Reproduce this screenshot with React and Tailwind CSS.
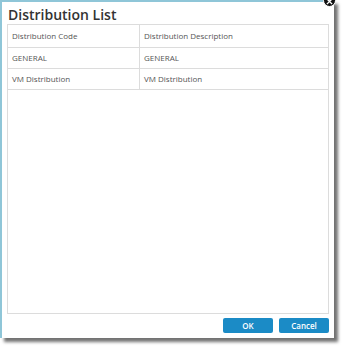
import React from 'react';

const rows = [
    ['Distribution Code', 'Distribution Description'],
    ['GENERAL', 'GENERAL'],
    ['VM Distribution', 'VM Distribution'],
];

const DistributionList = () => {
    return (
        <div className="relative w-[344px] h-[349px] bg-white" style={{ fontFamily: '"Open Sans", sans-serif' }}>
            <div className="flex flex-col w-[334px] h-[338px] bg-white border-l-2 border-t-2 border-[#8fc6d8] shadow-[4px_4px_3px_rgba(0,0,0,0.55)]">
                <h2 className="pl-[6px] pt-[3px] h-[22px] text-[14px] font-semibold leading-[19px] text-[#333]">
                    Distribution List
                </h2>
                <div className="ml-[5px] mr-[5px] h-[290px] border border-[#dcdcdc]">
                    {rows.map((r, i) => (
                        <div key={i} className={`flex ${i === 0 ? 'h-[23px]' : 'h-[21px]'} border-b border-[#dcdcdc] text-[8px] text-[#555]`}>
                            <div className="w-[132px] pl-[4px] flex items-center border-r border-[#dcdcdc]">{r[0]}</div>
                            <div className="flex-1 pl-[4px] flex items-center">{r[1]}</div>
                        </div>
                    ))}
                </div>
                <div className="flex justify-end gap-[6px] pr-[5px] pt-[4px]">
                    <button className="w-[50px] h-[15px] rounded-[2px] bg-[#1b8bc6] text-white text-[8px] font-semibold leading-[15px]">OK</button>
                    <button className="w-[50px] h-[15px] rounded-[2px] bg-[#1b8bc6] text-white text-[8px] font-semibold leading-[15px]">Cancel</button>
                </div>
            </div>
            <div className="absolute left-[323px] top-[-6px] w-[13px] h-[13px] rounded-full bg-[#111] border border-white flex items-center justify-center">
                <svg width="7" height="7" viewBox="0 0 8 8" className="mt-[2px]">
                    <path d="M1 1L7 7M7 1L1 7" stroke="white" strokeWidth="1.6" />
                </svg>
            </div>
        </div>
    );
};

export default function App() {
    return <DistributionList />;
}
